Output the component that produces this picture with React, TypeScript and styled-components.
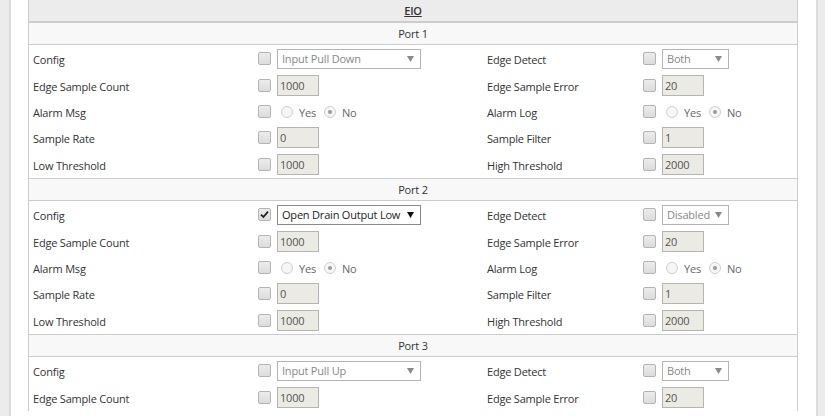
import styled, { createGlobalStyle } from "styled-components";

const GlobalStyle = createGlobalStyle`
  html, body {
    margin: 0;
    padding: 0;
    background: #ececec;
  }
  body {
    font-family: "Open Sans", "Liberation Sans", sans-serif;
    font-size: 11px;
    letter-spacing: -0.2px;
    color: #333;
    overflow: hidden;
  }
`;

const Page = styled.div`
  display: flex;
  padding-left: 9px;
  height: 416px;
  overflow: hidden;
`;

const Panel = styled.div`
  background: #fff;
  border-left: 2px solid #dcdcdc;
  border-right: 2px solid #dcdcdc;
  padding: 0 18px 0 17px;
  box-sizing: border-box;
  width: 809px;
`;

const Table = styled.div`
  border-left: 1px solid #cccccc;
  border-right: 1px solid #cccccc;
`;

const Title = styled.div`
  height: 21px;
  line-height: 21px;
  background: #ececec;
  border-bottom: 1px solid #cccccc;
  text-align: center;
  font-weight: 600;
  text-decoration: underline;
  color: #333;
`;

const PortHeader = styled.div`
  height: 21px;
  line-height: 21px;
  background: #f8f8f8;
  border-top: 1px solid #cccccc;
  border-bottom: 1px solid #cccccc;
  text-align: center;
`;

const Row = styled.div<{ $h?: number }>`
  display: grid;
  grid-template-columns: 225px 229px 156px 1fr;
  align-items: center;
  height: ${(p) => p.$h ?? 27}px;
`;

const Cell = styled.div`
  display: flex;
  align-items: center;
  padding: 0 4px;
  gap: 6px;
`;

const Label = styled.span`
  padding-top: 2px;
`;

const Box = styled.span`
  width: 11px;
  height: 11px;
  border: 1px solid #b4b4b4;
  border-radius: 2px;
  background: linear-gradient(#ececec, #dcdcdc);
  display: inline-flex;
  align-items: center;
  justify-content: center;
  flex: none;
`;

const Select = styled.div<{ $w: number; $on?: boolean }>`
  width: ${(p) => p.$w}px;
  height: 18px;
  border: 1px solid ${(p) => (p.$on ? "#8a8a8a" : "#b4b4b4")};
  background: #fff;
  box-sizing: content-box;
  display: flex;
  align-items: center;
  justify-content: space-between;
  padding: 0 6px 0 4px;
  color: ${(p) => (p.$on ? "#222" : "#888")};
  font-size: 11px;
`;

const TextBox = styled.input`
  width: 38px;
  height: 19px;
  border: 1px solid #b4b4b4;
  background: #ebebe4;
  color: #555;
  font-family: "Open Sans", "Liberation Sans", sans-serif;
  font-size: 11px;
  letter-spacing: -0.2px;
  padding: 0 0 0 2px;
  margin: 0;
  box-sizing: content-box;
`;

const Radios = styled.div`
  display: flex;
  align-items: center;
  margin-left: 4px;
  color: #666;
`;

const Radio = styled.span<{ $on?: boolean }>`
  width: 10px;
  height: 10px;
  border-radius: 50%;
  border: 1px solid #cfcfcf;
  background: #f6f6f6;
  display: inline-flex;
  align-items: center;
  justify-content: center;
  margin-right: 6px;
  &::after {
    content: "";
    display: ${(p) => (p.$on ? "block" : "none")};
    width: 4px;
    height: 4px;
    border-radius: 50%;
    background: #9a9a9a;
  }
`;

const RadioText = styled.span`
  margin-right: 8px;
  padding-top: 1px;
`;

function Check({ on }: { on?: boolean }) {
  return (
    <Box>
      {on ? (
        <svg width="9" height="9" viewBox="0 0 9 9">
          <path d="M1 4.6 L3.4 7 L8 1.6" stroke="#222" strokeWidth="1.8" fill="none" />
        </svg>
      ) : null}
    </Box>
  );
}

function Drop({ text, w, on }: { text: string; w: number; on?: boolean }) {
  return (
    <Select $w={w} $on={on}>
      <span>{text}</span>
      <svg width="7" height="6" viewBox="0 0 7 6">
        <path d="M0 0 L7 0 L3.5 6 Z" fill={on ? "#111" : "#8a8a8a"} />
      </svg>
    </Select>
  );
}

function YesNo() {
  return (
    <Radios>
      <Radio />
      <RadioText>Yes</RadioText>
      <Radio $on />
      <RadioText>No</RadioText>
    </Radios>
  );
}

type Port = {
  name: string;
  config: string;
  configOn?: boolean;
  edge: string;
  visibleRows: number;
};

const ports: Port[] = [
  { name: "Port 1", config: "Input Pull Down", edge: "Both", visibleRows: 5 },
  { name: "Port 2", config: "Open Drain Output Low", configOn: true, edge: "Disabled", visibleRows: 5 },
  { name: "Port 3", config: "Input Pull Up", edge: "Both", visibleRows: 2 },
];

function Field({ value }: { value: string }) {
  return <TextBox disabled readOnly value={value} />;
}

function PortBlock({ p }: { p: Port }) {
  const rows = [
    <Row key="config">
      <Cell><Label>Config</Label></Cell>
      <Cell>
        <Check on={p.configOn} />
        <Drop text={p.config} w={132} on={p.configOn} />
      </Cell>
      <Cell><Label>Edge Detect</Label></Cell>
      <Cell>
        <Check />
        <Drop text={p.edge} w={55} />
      </Cell>
    </Row>,
    <Row key="count">
      <Cell><Label>Edge Sample Count</Label></Cell>
      <Cell><Check /><Field value="1000" /></Cell>
      <Cell><Label>Edge Sample Error</Label></Cell>
      <Cell><Check /><Field value="20" /></Cell>
    </Row>,
    <Row key="alarm" $h={25}>
      <Cell><Label>Alarm Msg</Label></Cell>
      <Cell><Check /><YesNo /></Cell>
      <Cell><Label>Alarm Log</Label></Cell>
      <Cell><Check /><YesNo /></Cell>
    </Row>,
    <Row key="rate">
      <Cell><Label>Sample Rate</Label></Cell>
      <Cell><Check /><Field value="0" /></Cell>
      <Cell><Label>Sample Filter</Label></Cell>
      <Cell><Check /><Field value="1" /></Cell>
    </Row>,
    <Row key="threshold">
      <Cell><Label>Low Threshold</Label></Cell>
      <Cell><Check /><Field value="1000" /></Cell>
      <Cell><Label>High Threshold</Label></Cell>
      <Cell><Check /><Field value="2000" /></Cell>
    </Row>,
  ];
  return (
    <>
      <PortHeader>{p.name}</PortHeader>
      {rows.slice(0, p.visibleRows)}
    </>
  );
}

export default function App() {
  return (
    <Page>
      <GlobalStyle />
      <Panel>
        <Table>
          <Title>EIO</Title>
          {ports.map((p) => (
            <PortBlock key={p.name} p={p} />
          ))}
        </Table>
      </Panel>
    </Page>
  );
}
